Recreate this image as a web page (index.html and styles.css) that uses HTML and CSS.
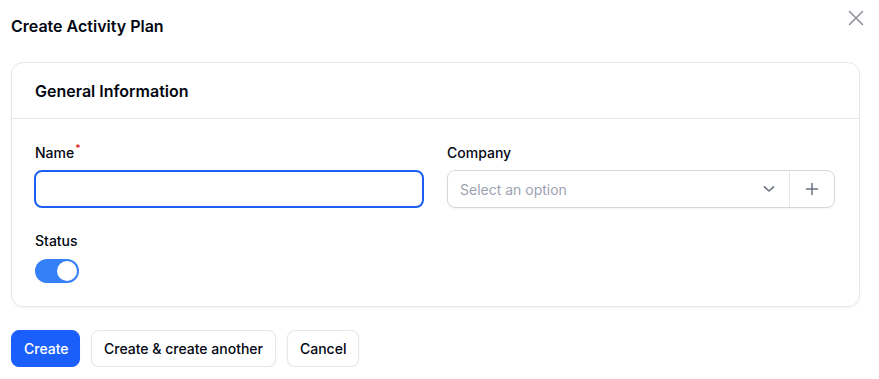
FILE: index.html
```html
<!DOCTYPE html>
<html>
<head>
<meta charset="utf-8">
<link rel="stylesheet" href="styles.css">
</head>
<body>
<div class="modal">
  <div class="modal-head">
    <h2 class="title">Create Activity Plan</h2>
    <button class="close" aria-label="Close">
      <svg width="16" height="16" viewBox="0 0 16 16"><path d="M1.5 1.5 L14.5 14.5 M14.5 1.5 L1.5 14.5" stroke="#8b8d97" stroke-width="1.5" stroke-linecap="round" fill="none"/></svg>
    </button>
  </div>
  <section class="card">
    <div class="card-head">General Information</div>
    <div class="card-body">
      <div class="grid">
        <div class="field">
          <label class="label">Name<sup class="req">*</sup></label>
          <div class="input focused"></div>
        </div>
        <div class="field">
          <label class="label">Company</label>
          <div class="select">
            <div class="select-main">
              <span class="placeholder">Select an option</span>
              <svg width="12" height="8" viewBox="0 0 12 8"><path d="M1.5 1.8 L6 6 L10.5 1.8" stroke="#6b7280" stroke-width="1.6" fill="none" stroke-linecap="round" stroke-linejoin="round"/></svg>
            </div>
            <div class="select-suffix">
              <svg width="14" height="14" viewBox="0 0 14 14"><path d="M7 1.5 V12.5 M1.5 7 H12.5" stroke="#6b7280" stroke-width="1.5" stroke-linecap="round"/></svg>
            </div>
          </div>
        </div>
      </div>
      <div class="field status">
        <label class="label">Status</label>
        <div class="toggle"><span class="knob"></span></div>
      </div>
    </div>
  </section>
  <div class="actions">
    <button class="btn primary">Create</button>
    <button class="btn">Create &amp; create another</button>
    <button class="btn">Cancel</button>
  </div>
</div>
</body>
</html>
```
FILE: styles.css
```css
* { box-sizing: border-box; }
html, body { margin: 0; background: #fff; }
body { font-family: Inter, "Noto Sans", sans-serif; color: #030712; }
.modal { padding: 14px 20px 0 11px; }
.modal-head { display: flex; justify-content: space-between; align-items: flex-start; height: 24px; }
.title { margin: 0; font-size: 16px; line-height: 24px; font-weight: 600; }
.close { border: 0; background: none; padding: 0; margin-top: -4px; margin-right: -5px; width: 16px; height: 16px; display: flex; }
.card { margin-top: 24px; border: 1px solid #e5e7eb; border-radius: 12px; box-shadow: 0 1px 2px rgba(0,0,0,0.05); width: 849px; }
.card-head { height: 56px; padding: 0 23px; display: flex; align-items: center; font-size: 16px; font-weight: 600; border-bottom: 1px solid #e5e7eb; }
.card-body { padding: 24px 23px 23px; }
.grid { display: grid; grid-template-columns: 388px 388px; column-gap: 24px; }
.field { display: flex; flex-direction: column; }
.label { font-size: 14px; line-height: 20px; font-weight: 500; height: 20px; margin-bottom: 7px; }
.req { color: #dc2626; font-size: 10px; line-height: 0; vertical-align: 0; position: relative; top: -6px; margin-left: 1px; font-weight: 600; }
.input { height: 38px; border-radius: 8px; }
.input.focused { border: 2px solid #1d5ff5; margin: 0 -1px; }
.select { height: 38px; border: 1px solid #d6d8dd; border-radius: 8px; display: flex; box-shadow: 0 1px 2px rgba(0,0,0,0.05); }
.select-main { flex: 1; display: flex; align-items: center; justify-content: space-between; padding: 0 14px 0 12px; }
.placeholder { font-size: 14px; color: #9ca3af; }
.select-suffix { width: 45px; border-left: 1px solid #e5e7eb; display: flex; align-items: center; justify-content: center; }
.status { margin-top: 23px; }
.status .label { margin-bottom: 8px; }
.toggle { width: 44px; height: 24px; border-radius: 12px; background: #3580f6; position: relative; }
.knob { position: absolute; right: 2px; top: 2px; width: 20px; height: 20px; border-radius: 50%; background: #fff; }
.actions { display: flex; gap: 11px; margin-top: 23px; }
.btn { font-family: Inter, "Noto Sans", sans-serif; font-size: 14px; font-weight: 500; height: 37px; padding: 0 12px; border-radius: 8px; border: 1px solid #e5e7eb; background: #fff; color: #030712; box-shadow: 0 1px 2px rgba(0,0,0,0.05); }
.btn.primary { background: #1a5ffc; color: #fff; border-color: #1a5ffc; width: 69px; }
```
